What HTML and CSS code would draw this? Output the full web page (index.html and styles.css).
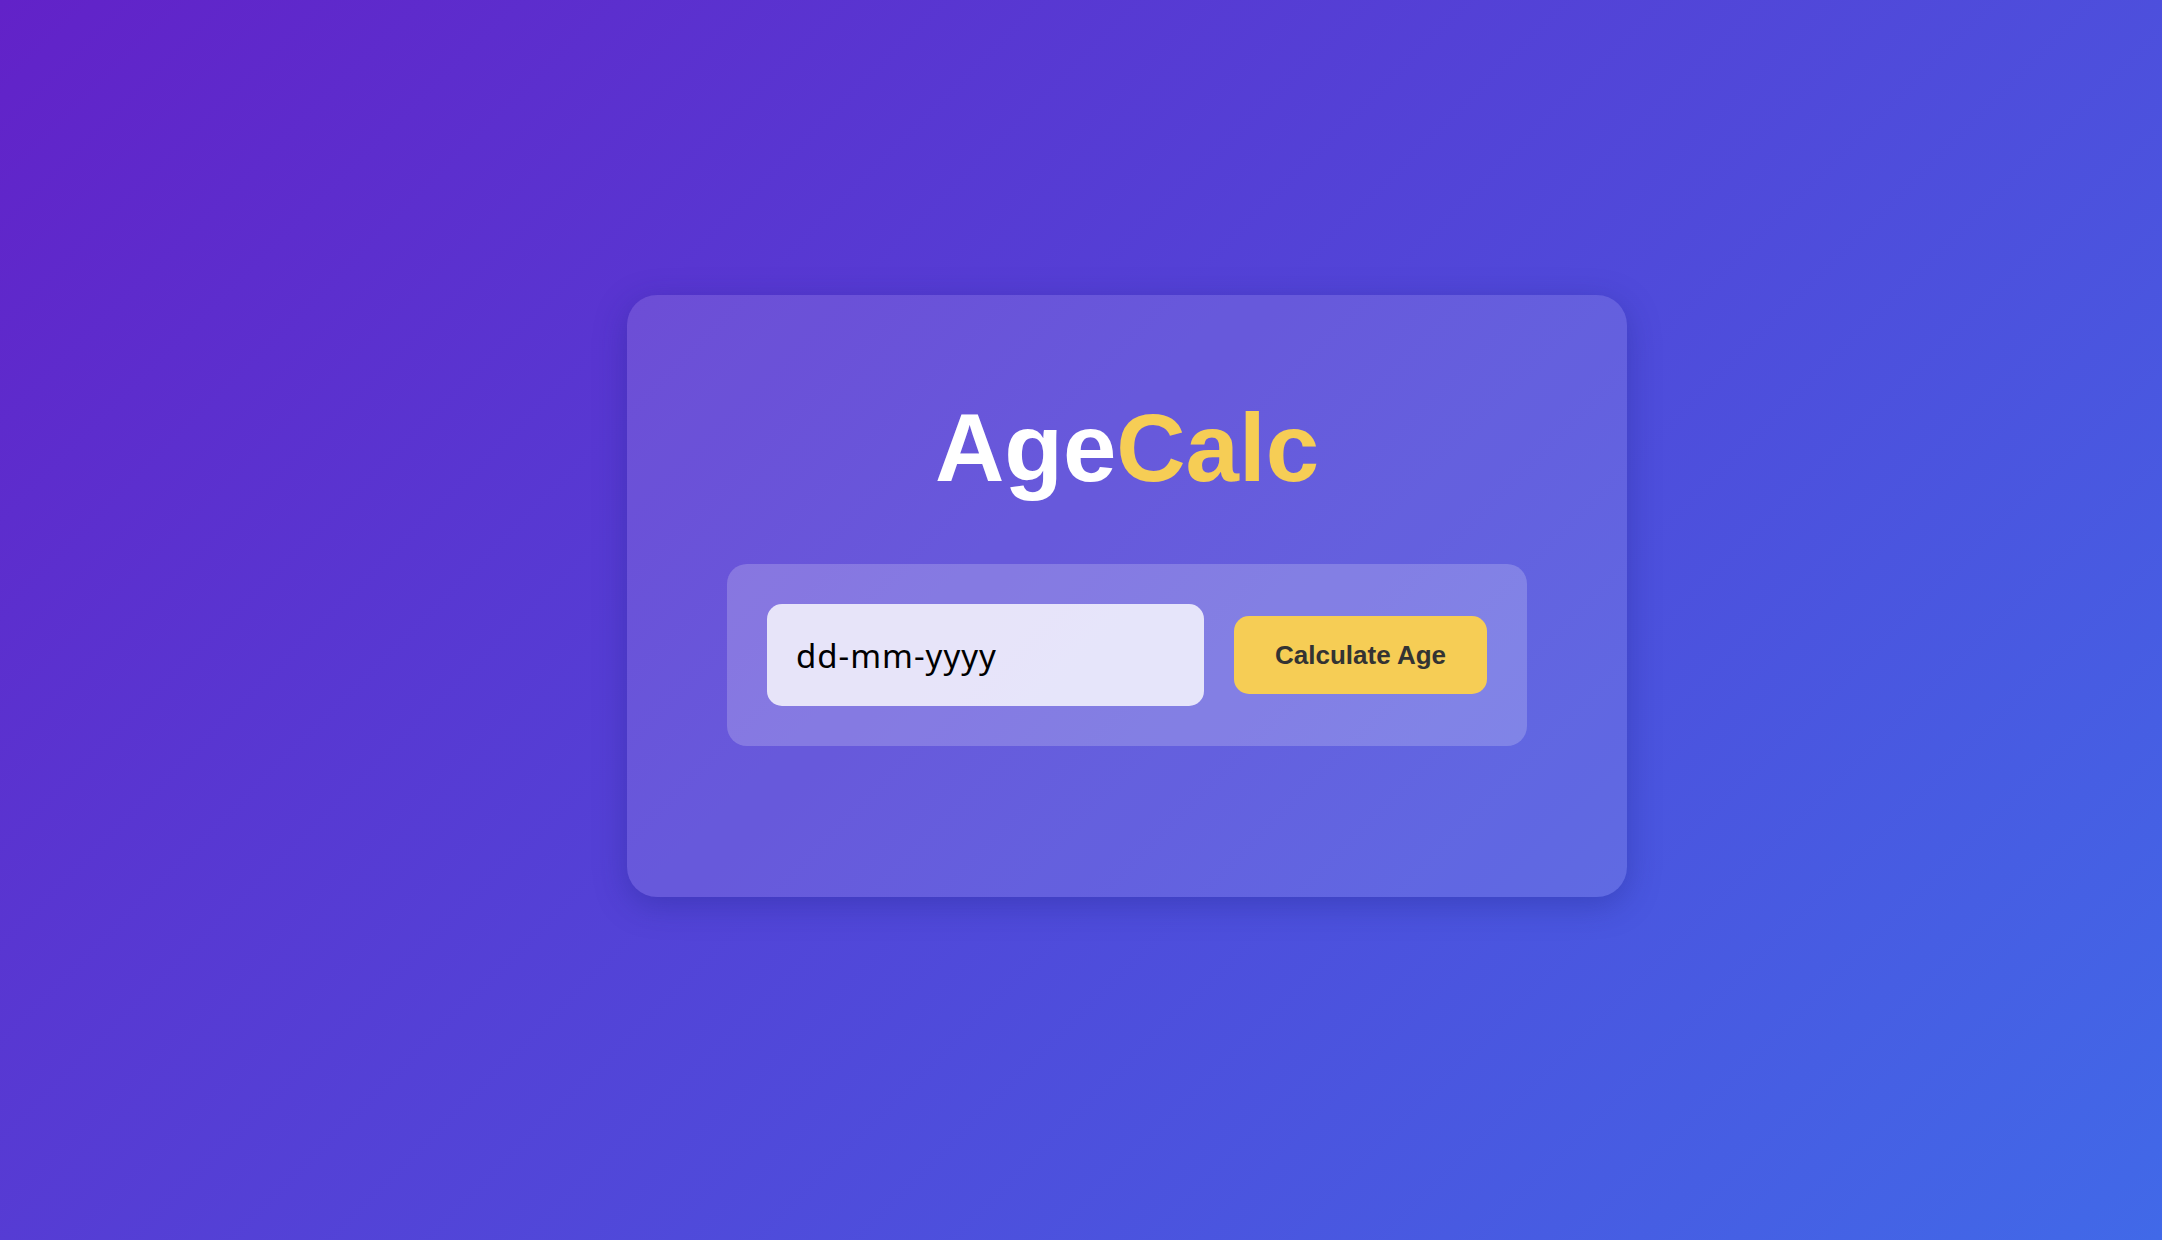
FILE: index.html
```html
<!DOCTYPE html>
<html lang="en">
<head>
<meta charset="utf-8">
<title>AgeCalc</title>
<link rel="stylesheet" href="styles.css">
</head>
<body>
<main class="page">
  <section class="card">
    <h1 class="title">Age<span class="accent">Calc</span></h1>
    <div class="form-box">
      <input class="date-input" type="text" placeholder="dd-mm-yyyy" aria-label="Date of birth">
      <button class="calc-btn" type="button">Calculate Age</button>
    </div>
  </section>
</main>
</body>
</html>
```
FILE: styles.css
```css
html, body {
  margin: 0;
  padding: 0;
}

body {
  min-height: 100vh;
  background: linear-gradient(135deg, #6222c8 0%, #4169e8 100%);
  font-family: "Liberation Sans", Arial, sans-serif;
}

.page {
  min-height: 100vh;
  box-sizing: border-box;
  display: flex;
  align-items: flex-start;
  padding: 295px 0 0 627px;
}

.card {
  width: 1000px;
  box-sizing: border-box;
  padding: 98px 100px 151px;
  border-radius: 30px;
  background: rgba(255, 255, 255, 0.12);
  box-shadow: 0 8px 32px 0 rgba(31, 38, 135, 0.37);
}

.title {
  margin: 0 0 61px;
  font-family: "Liberation Sans", Arial, sans-serif;
  font-size: 96px;
  font-weight: 700;
  line-height: normal;
  text-align: center;
  color: #ffffff;
}

.accent {
  color: #f6cd55;
}

.form-box {
  display: flex;
  align-items: center;
  gap: 30px;
  padding: 40px;
  border-radius: 20px;
  background: rgba(255, 255, 255, 0.2);
}

.date-input {
  flex: 1;
  min-width: 0;
  height: 102px;
  box-sizing: border-box;
  padding: 0 29px;
  border: none;
  outline: none;
  border-radius: 15px;
  background: rgba(255, 255, 255, 0.8);
  font-family: "Noto Sans", "Open Sans", sans-serif;
  font-size: 33px;
  letter-spacing: 1px;
  color: #000000;
}

.date-input::placeholder {
  color: #000000;
  opacity: 1;
}

.calc-btn {
  flex: none;
  padding: 24px 41px;
  border: none;
  border-radius: 15px;
  background: #f6cd55;
  color: #333333;
  font-family: "Liberation Sans", Arial, sans-serif;
  font-size: 26px;
  font-weight: 700;
  line-height: 30px;
  cursor: pointer;
}
```
